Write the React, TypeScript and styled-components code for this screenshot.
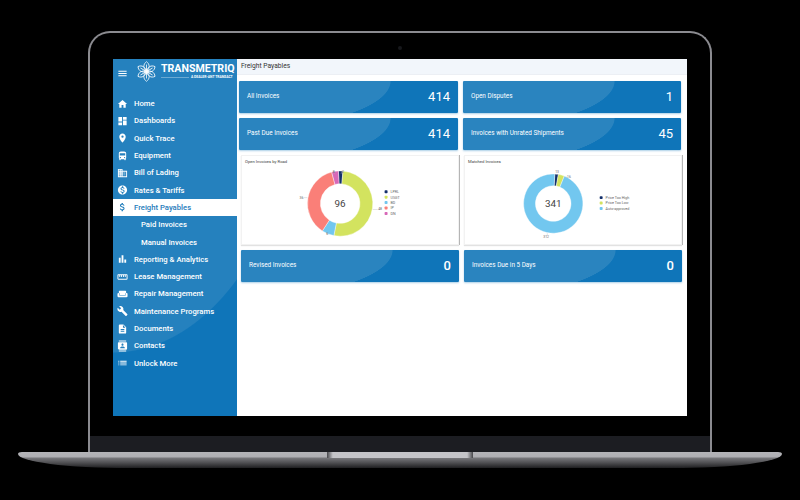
import { createGlobalStyle, styled } from "styled-components";
import { IconType } from "react-icons";
import {
  MdAttachMoney,
  MdBarChart,
  MdBuild,
  MdBusiness,
  MdContacts,
  MdDashboard,
  MdDescription,
  MdDirectionsBus,
  MdHome,
  MdList,
  MdLocationOn,
  MdMenu,
  MdMonetizationOn,
  MdStraighten,
  MdWeekend,
} from "react-icons/md";

const GlobalStyle = createGlobalStyle`
  html, body {
    margin: 0;
    padding: 0;
    background: #000;
  }
  * {
    box-sizing: border-box;
  }
`;

type NavEntry = { label: string; icon?: IconType; active?: boolean };

const navItems: NavEntry[] = [
  { label: "Home", icon: MdHome },
  { label: "Dashboards", icon: MdDashboard },
  { label: "Quick Trace", icon: MdLocationOn },
  { label: "Equipment", icon: MdDirectionsBus },
  { label: "Bill of Lading", icon: MdBusiness },
  { label: "Rates & Tariffs", icon: MdMonetizationOn },
  { label: "Freight Payables", icon: MdAttachMoney, active: true },
  { label: "Paid Invoices" },
  { label: "Manual Invoices" },
  { label: "Reporting & Analytics", icon: MdBarChart },
  { label: "Lease Management", icon: MdStraighten },
  { label: "Repair Management", icon: MdWeekend },
  { label: "Maintenance Programs", icon: MdBuild },
  { label: "Documents", icon: MdDescription },
  { label: "Contacts", icon: MdContacts },
  { label: "Unlock More", icon: MdList },
];

type Slice = { from: number; to: number; color: string };
type Tag = { x: number; y: number; text: string; line: [number, number, number, number] };
type Legend = { label: string; color: string };

type ChartData = {
  title: string;
  total: string;
  cx: number;
  outer: number;
  inner: number;
  slices: Slice[];
  tags: Tag[];
  legendX: number;
  legendY: number;
  legend: Legend[];
};

const openChart: ChartData = {
  title: "Open Invoices by Road",
  total: "96",
  cx: 98,
  outer: 33,
  inner: 20,
  slices: [
    { from: -3, to: 5, color: "#14306b" },
    { from: 5, to: 191, color: "#d3e35f" },
    { from: 191, to: 213, color: "#72c7ef" },
    { from: 213, to: 345, color: "#fa7f78" },
    { from: 345, to: 357, color: "#d768b8" },
  ],
  tags: [
    { x: 90.5, y: 6, text: "8", line: [92, 7, 93, 4.5] },
    { x: 100, y: 6, text: "2", line: [99, 7, 100, 4] },
    { x: 136.5, y: 44, text: "48", line: [131, 43, 136, 43] },
    { x: 57, y: 32, text: "36", line: [61, 31, 65, 31] },
    { x: 84, y: 69, text: "6", line: [85, 66, 85, 68] },
  ],
  legendX: 143,
  legendY: 25,
  legend: [
    { label: "LPRL", color: "#14306b" },
    { label: "USGT", color: "#d3e35f" },
    { label: "BD", color: "#72c7ef" },
    { label: "IP", color: "#fa7f78" },
    { label: "DN", color: "#d768b8" },
  ],
};

const matchedChart: ChartData = {
  title: "Matched Invoices",
  total: "341",
  cx: 88,
  outer: 30,
  inner: 18,
  slices: [
    { from: 3, to: 10, color: "#14306b" },
    { from: 10, to: 22, color: "#d3e35f" },
    { from: 22, to: 363, color: "#72c7ef" },
  ],
  tags: [
    { x: 90, y: 6, text: "13", line: [91, 7, 91, 8] },
    { x: 102, y: 11, text: "16", line: [100, 11, 102, 10] },
    { x: 78, y: 72, text: "312", line: [82, 67, 82, 69] },
  ],
  legendX: 135,
  legendY: 31,
  legend: [
    { label: "Price Too High", color: "#14306b" },
    { label: "Price Too Low", color: "#d3e35f" },
    { label: "Auto-approved", color: "#72c7ef" },
  ],
};

const CHART_CY = 37;

const slicePath = (cx: number, cy: number, outer: number, inner: number, from: number, to: number) => {
  const point = (r: number, deg: number) => {
    const rad = ((deg - 90) * Math.PI) / 180;
    return `${(cx + r * Math.cos(rad)).toFixed(2)} ${(cy + r * Math.sin(rad)).toFixed(2)}`;
  };
  const large = to - from > 180 ? 1 : 0;
  return `M${point(outer, from)} A${outer} ${outer} 0 ${large} 1 ${point(outer, to)} L${point(inner, to)} A${inner} ${inner} 0 ${large} 0 ${point(inner, from)} Z`;
};

const Donut = ({ data }: { data: ChartData }) => (
  <ChartSvg viewBox="0 0 216 78">
    {data.slices.map((slice) => (
      <path
        key={slice.color}
        d={slicePath(data.cx, CHART_CY, data.outer, data.inner, slice.from, slice.to)}
        fill={slice.color}
        stroke="#fff"
        strokeWidth="0.4"
      />
    ))}
    <text x={data.cx} y={CHART_CY + 3.5} textAnchor="middle" fontSize="10" fill="#444">
      {data.total}
    </text>
    {data.tags.map((tag) => (
      <g key={tag.text}>
        <line x1={tag.line[0]} y1={tag.line[1]} x2={tag.line[2]} y2={tag.line[3]} stroke="#bbb" strokeWidth="0.4" />
        <text x={tag.x} y={tag.y} fontSize="3.4" fill="#666">
          {tag.text}
        </text>
      </g>
    ))}
    {data.legend.map((item, i) => (
      <g key={item.label}>
        <rect x={data.legendX} y={data.legendY + i * 5.5 - 1.5} width="3" height="3" rx="0.8" fill={item.color} />
        <text x={data.legendX + 6} y={data.legendY + i * 5.5 + 1.4} fontSize="3.7" fill="#666">
          {item.label}
        </text>
      </g>
    ))}
  </ChartSvg>
);

const StatTile = ({ label, value, $bold }: { label: string; value: string; $bold?: boolean }) => (
  <Tile>
    <TileLabel>{label}</TileLabel>
    <TileValue $bold={$bold}>{value}</TileValue>
  </Tile>
);

const Logo = () => (
  <LogoMark viewBox="0 0 24 24" fill="none" stroke="#fff" strokeWidth="0.9">
    {[0, 60, 120, 180, 240, 300].map((angle) => (
      <g key={angle} transform={`rotate(${angle} 12 12)`}>
        <path d="M12 12 C8 8.5 8 3.5 12 0.8 C16 3.5 16 8.5 12 12Z" />
        <path d="M12 12 L12 4" />
      </g>
    ))}
    <circle cx="12" cy="12" r="2.2" />
  </LogoMark>
);

const App = () => (
  <>
    <GlobalStyle />
    <Page>
      <Lid>
        <Camera />
        <Screen>
          <Sidebar>
            <Brand>
              <MenuButton>
                <MdMenu />
              </MenuButton>
              <Logo />
              <BrandText>
                <BrandName>TRANSMETRIQ</BrandName>
                <BrandTag>A DEALER-ANT TRANSACT</BrandTag>
              </BrandText>
            </Brand>
            <Nav>
              {navItems.map(({ label, icon: Icon, active }) => (
                <NavRow key={label} $active={active}>
                  {Icon ? (
                    <NavIcon $active={active}>
                      <Icon />
                    </NavIcon>
                  ) : null}
                  <NavLabel $sub={!Icon}>{label}</NavLabel>
                </NavRow>
              ))}
            </Nav>
          </Sidebar>
          <Main>
            <TopBar>Freight Payables</TopBar>
            <Content>
              <TileRow>
                <StatTile label="All Invoices" value="414" />
                <StatTile label="Open Disputes" value="1" />
              </TileRow>
              <TileRow>
                <StatTile label="Past Due Invoices" value="414" />
                <StatTile label="Invoices with Unrated Shipments" value="45" />
              </TileRow>
              <TileRow $inset>
                <ChartCard>
                  <ChartTitle>{openChart.title}</ChartTitle>
                  <Donut data={openChart} />
                </ChartCard>
                <ChartCard>
                  <ChartTitle>{matchedChart.title}</ChartTitle>
                  <Donut data={matchedChart} />
                </ChartCard>
              </TileRow>
              <TileRow $inset>
                <StatTile label="Revised Invoices" value="0" $bold />
                <StatTile label="Invoices Due in 5 Days" value="0" $bold />
              </TileRow>
            </Content>
          </Main>
        </Screen>
        <Chin />
      </Lid>
      <Base>
        <Notch />
      </Base>
    </Page>
  </>
);

export default App;

const Page = styled.div`
  width: 800px;
  height: 500px;
  padding-top: 31px;
  background: #000;
  display: flex;
  flex-direction: column;
  align-items: center;
  overflow: hidden;
  font-family: Roboto, "Liberation Sans", sans-serif;
`;

const Lid = styled.div`
  position: relative;
  width: 624px;
  height: 421px;
  padding-top: 26px;
  display: flex;
  flex-direction: column;
  align-items: center;
  justify-content: space-between;
  background: #000;
  border: 2px solid #8b8b90;
  border-bottom: none;
  border-radius: 22px 22px 0 0;
`;

const Camera = styled.span`
  position: absolute;
  top: 13px;
  left: 308px;
  width: 4px;
  height: 4px;
  border-radius: 50%;
  background: #17181c;
`;

const Screen = styled.div`
  width: 574px;
  height: 357px;
  display: flex;
  background: #fff;
`;

const Sidebar = styled.aside`
  width: 124px;
  flex-shrink: 0;
  color: #fff;
  background: radial-gradient(188px 294px at 0 0, #2581be 99.6%, #0f75b9 100%);
`;

const Brand = styled.div`
  height: 36px;
  padding-left: 4px;
  display: flex;
  align-items: flex-start;
`;

const MenuButton = styled.span`
  width: 11px;
  height: 28px;
  display: flex;
  align-items: center;
  font-size: 11px;
`;

const LogoMark = styled.svg`
  width: 21px;
  height: 21px;
  margin: 2px 0 0 8px;
  flex-shrink: 0;
`;

const BrandText = styled.div`
  margin: 4px 0 0 4px;
  width: 74px;
  display: flex;
  flex-direction: column;
`;

const BrandName = styled.span`
  font-size: 10.6px;
  line-height: 11px;
  font-weight: 700;
  white-space: nowrap;
`;

const BrandTag = styled.span`
  margin-top: 1px;
  padding-left: 30px;
  font-size: 3.4px;
  line-height: 5px;
  font-weight: 700;
  white-space: nowrap;
  background: linear-gradient(#9cc6e2, #9cc6e2) 0 50% / 28px 0.6px no-repeat;
`;

const Nav = styled.nav`
  display: flex;
  flex-direction: column;
`;

const NavRow = styled.div<{ $active?: boolean }>`
  height: 17.3px;
  padding-left: 4px;
  display: flex;
  align-items: center;
  background: ${(p) => (p.$active ? "#fff" : "transparent")};
  color: ${(p) => (p.$active ? "#1f7cbb" : "#fff")};
`;

const NavIcon = styled.span<{ $active?: boolean }>`
  width: 11px;
  margin-right: 6px;
  display: flex;
  justify-content: center;
  font-size: 12px;
  color: ${(p) => (p.$active ? "#1f7cbb" : "#fff")};
`;

const NavLabel = styled.span<{ $sub?: boolean }>`
  margin-left: ${(p) => (p.$sub ? "24px" : "0")};
  font-size: 7.7px;
  font-weight: 500;
  white-space: nowrap;
`;

const Main = styled.main`
  flex: 1;
  min-width: 0;
`;

const TopBar = styled.header`
  height: 16px;
  padding: 0 0 2px 4px;
  display: flex;
  align-items: center;
  background: #f2f6fb;
  border-bottom: 1px solid #eceff4;
  font-size: 6.7px;
  color: #333;
`;

const Content = styled.div`
  padding: 6px 0 0 2px;
  display: flex;
  flex-direction: column;
  gap: 5px;
`;

const TileRow = styled.div<{ $inset?: boolean }>`
  display: grid;
  grid-template-columns: ${(p) => (p.$inset ? "218px 218px" : "219px 218px")};
  gap: 5px;
  margin-left: ${(p) => (p.$inset ? "2px" : "0")};
`;

const Tile = styled.div`
  height: 32px;
  padding: 0 8px 2px;
  display: flex;
  align-items: center;
  justify-content: space-between;
  color: #fff;
  border-radius: 1px;
  background: radial-gradient(152px 48px at 0 0, #2a84bf 99.4%, #0f75b9 100%);
  box-shadow: 0 1px 2px rgba(15, 117, 185, 0.35);
`;

const TileLabel = styled.span`
  font-size: 6.4px;
  white-space: nowrap;
`;

const TileValue = styled.span<{ $bold?: boolean }>`
  font-size: 13px;
  font-weight: ${(p) => (p.$bold ? 500 : 400)};
`;

const ChartCard = styled.div`
  height: 90px;
  display: flex;
  flex-direction: column;
  background: #fff;
  border: 1px solid #f2f2f2;
  box-shadow: 1px 0 0 #b5b5b5, 0 1px 1px #e2e2e2;
`;

const ChartTitle = styled.div`
  height: 11px;
  padding: 3px 0 0 3px;
  font-size: 4.2px;
  line-height: 6px;
  color: #444;
`;

const ChartSvg = styled.svg`
  width: 216px;
  height: 78px;
  font-family: Roboto, "Liberation Sans", sans-serif;
`;

const Chin = styled.div`
  width: 100%;
  height: 16px;
  background: #1c1d22;
`;

const Base = styled.div`
  position: relative;
  width: 764px;
  height: 16px;
  border-radius: 4px 4px 110px 110px / 2px 2px 14px 14px;
  background: linear-gradient(#b4b4b8 0, #aeaeb2 5px, #77777b 6px, #4d4d50 11px, #1e1e20 16px);
`;

const Notch = styled.span`
  position: absolute;
  top: 0;
  left: 309px;
  width: 146px;
  height: 6px;
  background: linear-gradient(90deg, #46464a 0, #c4c4c8 4%, #c4c4c8 96%, #46464a 100%);
`;
